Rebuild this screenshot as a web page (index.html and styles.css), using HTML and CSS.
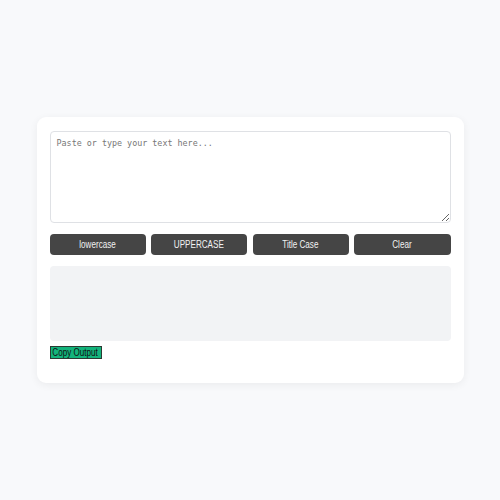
FILE: index.html
```html
<!DOCTYPE html>
<html>
<head>
<meta charset="utf-8">
<link rel="stylesheet" href="styles.css">
</head>
<body>
  <main class="card">
    <textarea class="input" placeholder="Paste or type your text here..."></textarea>
    <div class="actions">
      <button class="btn"><span class="label">lowercase</span></button>
      <button class="btn"><span class="label">UPPERCASE</span></button>
      <button class="btn"><span class="label">Title Case</span></button>
      <button class="btn"><span class="label">Clear</span></button>
    </div>
    <div class="output"></div>
    <button class="copy"><span class="label">Copy Output</span></button>
  </main>
</body>
</html>
```
FILE: styles.css
```css
html, body {
  margin: 0;
  padding: 0;
}
body {
  background: #f8f9fb;
  min-height: 100vh;
  display: flex;
  align-items: center;
  justify-content: center;
  font-family: "Liberation Sans", Arial, sans-serif;
}
.card {
  box-sizing: border-box;
  width: 427px;
  height: 266px;
  background: #fff;
  border-radius: 9px;
  box-shadow: 0 2px 8px rgba(0, 0, 0, 0.06);
  padding: 14px 13px 0 13px;
  display: flex;
  flex-direction: column;
}
.input {
  box-sizing: border-box;
  width: 100%;
  height: 92px;
  margin: 0;
  border: 1px solid #dfe1e5;
  border-radius: 4px;
  padding: 6px 6px;
  font-family: "DejaVu Sans Mono", "Liberation Mono", monospace;
  font-size: 8.4px;
  color: #333;
  resize: vertical;
  outline: none;
}
.input::placeholder {
  color: #777;
}
.actions {
  margin-top: 11px;
  display: grid;
  grid-template-columns: repeat(4, 1fr);
  gap: 5.5px;
}
.label {
  display: inline-block;
  transform: scaleX(0.81);
  white-space: nowrap;
}
.btn {
  height: 21px;
  margin: 0;
  border: none;
  border-radius: 4px;
  background: #454545;
  color: #f2f2f2;
  font-family: "Liberation Sans", Arial, sans-serif;
  font-size: 10px;
  padding: 0;
}
.output {
  margin-top: 11px;
  height: 75px;
  background: #f2f3f5;
  border-radius: 4px;
}
.copy {
  box-sizing: border-box;
  align-self: flex-start;
  margin-top: 5px;
  width: 52px;
  height: 13px;
  padding: 0;
  border: 1px solid #2b3a33;
  background: #13b47c;
  color: #111;
  font-family: "Liberation Sans", Arial, sans-serif;
  font-size: 10px;
  line-height: 11px;
  display: flex;
  justify-content: center;
  overflow: visible;
}
```
